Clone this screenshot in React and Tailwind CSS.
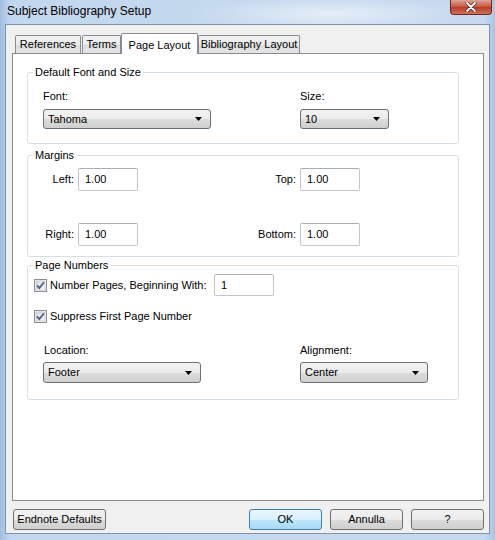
import React from 'react'

const FONT = { fontFamily: '"Liberation Sans", "DejaVu Sans", sans-serif' }

function Arrow() {
  return (
    <svg width="7" height="4" viewBox="0 0 7 4">
      <path d="M0 0 H7 L3.5 4 Z" fill="#000" />
    </svg>
  )
}

function Combo({ value, w, h }) {
  return (
    <div className={`${w} ${h} flex items-center justify-between pl-[4px] pr-[8px] border border-[#707070] rounded-[3px] bg-[linear-gradient(#f2f2f2,#ebebeb_50%,#dddddd_51%,#cfcfcf)] text-[11px] text-black whitespace-nowrap`}>
      <span>{value}</span>
      <Arrow />
    </div>
  )
}

function TextBox({ value, h = 'h-[23px]' }) {
  return (
    <div className={`w-[60px] ${h} flex items-center pl-[6px] bg-white border border-[#c3c6cc] border-t-[#a9adb4] rounded-[2px] text-[11px]`}>
      {value}
    </div>
  )
}

function Check() {
  return (
    <svg width="13" height="13" viewBox="0 0 13 13" className="shrink-0">
      <defs>
        <linearGradient id="cb" x1="0" y1="0" x2="1" y2="1">
          <stop offset="0" stopColor="#d7dbe2" />
          <stop offset="1" stopColor="#f9fafb" />
        </linearGradient>
      </defs>
      <rect x="0.5" y="0.5" width="12" height="12" fill="#f4f4f4" stroke="#8e8f8f" />
      <rect x="2" y="2" width="9" height="9" fill="url(#cb)" stroke="#b6bcc6" strokeWidth="0.6" />
      <path d="M3 6.3 L5.3 9 L10 3.2" fill="none" stroke="#4c5e86" strokeWidth="1.8" />
    </svg>
  )
}

function Group({ title, className = '', children }) {
  return (
    <fieldset className={`ml-[14px] mr-[24px] border border-[#d5dfe5] rounded-[3px] ${className}`}>
      <legend className="ml-[5px] px-[2px] text-[11px] leading-[14px] text-black whitespace-nowrap">{title}</legend>
      {children}
    </fieldset>
  )
}

function Button({ children, w, primary }) {
  const skin = primary
    ? 'border-[#3c7fb1] bg-[linear-gradient(#eaf6fd,#d9f0fc_50%,#bee6fd_51%,#a7d9f5)]'
    : 'border-[#707070] bg-[linear-gradient(#f2f2f2,#ebebeb_50%,#dddddd_51%,#cfcfcf)]'
  return (
    <div className={`${w} h-[21px] flex items-center justify-center border rounded-[3px] text-[11px] text-black whitespace-nowrap ${skin}`}>
      {children}
    </div>
  )
}

function Tab({ label, w, active }) {
  if (active) {
    return (
      <div className={`${w} h-[21px] -mb-[1px] z-10 flex items-start justify-center pt-[3px] bg-white border border-b-0 border-[#898c95] rounded-t-[2px] text-[11px] whitespace-nowrap`}>
        {label}
      </div>
    )
  }
  return (
    <div className={`${w} h-[18px] flex items-center justify-center bg-[linear-gradient(#f2f2f2,#ebebeb_50%,#dddddd_51%,#e3e3e3)] border border-b-0 border-[#898c95] rounded-t-[2px] text-[11px] whitespace-nowrap`}>
      {label}
    </div>
  )
}

export default function App() {
  return (
    <div style={FONT} className="w-[495px] h-[540px] flex flex-col overflow-hidden bg-[radial-gradient(ellipse_140px_18px_at_330px_14px,rgba(255,255,255,0.55),transparent),linear-gradient(90deg,#9fbde0,#c3d7ee_2%,#c6d9ee_98%,#a7c3e3)] text-black">
      {/* title bar */}
      <div className="h-[24px] flex items-start justify-between shrink-0">
        <div className="pl-[7px] pt-[4px] text-[12px] leading-[15px] text-black whitespace-nowrap">Subject Bibliography Setup</div>
        <div className="mr-[3px] w-[42px] h-[15px] flex items-center justify-center rounded-b-[4px] border border-t-0 border-[#6b2a20] bg-[linear-gradient(#e0a195,#c8553f_50%,#b73a24_51%,#d0705a)]">
          <svg width="12" height="10" viewBox="0 0 12 10">
            <path d="M2 1 L10 9 M10 1 L2 9" stroke="#4a2a26" strokeWidth="3.2" strokeLinecap="round" />
            <path d="M2 1 L10 9 M10 1 L2 9" stroke="#fff" strokeWidth="1.8" strokeLinecap="round" />
          </svg>
        </div>
      </div>

      {/* client area */}
      <div className="mx-[5px] mb-[6px] flex-1 flex flex-col bg-[#f0f0f0] border border-[#7f93aa]">
        <div className="flex items-end pl-[9px] pt-[7px] h-[28px] shrink-0">
          <Tab label="References" w="w-[66px]" />
          <div className="w-[1px]" />
          <Tab label="Terms" w="w-[39px]" />
          <Tab label="Page Layout" w="w-[77px]" active />
          <Tab label="Bibliography Layout" w="w-[102px]" />
        </div>

        <div className="ml-[6px] mr-[5px] h-[448px] bg-white border border-[#898c95] flex flex-col">
          <Group title="Default Font and Size" className="mt-[11px] pb-[14px]">
            <div className="flex pl-[15px] mt-[10px]">
              <div className="w-[257px]">
                <div className="h-[14px] leading-[14px] text-[11px]">Font:</div>
                <div className="mt-[6px]"><Combo value="Tahoma" w="w-[168px]" h="h-[20px]" /></div>
              </div>
              <div>
                <div className="h-[14px] leading-[14px] text-[11px]">Size:</div>
                <div className="mt-[6px]"><Combo value="10" w="w-[89px]" h="h-[20px]" /></div>
              </div>
            </div>
          </Group>

          <Group title="Margins" className="mt-[4px] pb-[10px]">
            <div className="flex items-center mt-[6px] text-[11px]">
              <div className="w-[46px] text-right">Left:</div>
              <div className="ml-[4px]"><TextBox value="1.00" /></div>
              <div className="w-[158px] text-right">Top:</div>
              <div className="ml-[4px]"><TextBox value="1.00" /></div>
            </div>
            <div className="flex items-center mt-[32px] text-[11px]">
              <div className="w-[46px] text-right">Right:</div>
              <div className="ml-[4px]"><TextBox value="1.00" /></div>
              <div className="w-[158px] text-right">Bottom:</div>
              <div className="ml-[4px]"><TextBox value="1.00" /></div>
            </div>
          </Group>

          <Group title="Page Numbers" className="mt-[1px] pb-[16px]">
            <div className="flex items-center mt-[2px] text-[11px]">
              <div className="w-[180px] ml-[6px] flex items-center whitespace-nowrap">
                <Check />
                <span className="ml-[3px]">Number Pages, Beginning With:</span>
              </div>
              <TextBox value="1" h="h-[22px]" />
            </div>
            <div className="flex items-center ml-[6px] mt-[13px] h-[14px] text-[11px] whitespace-nowrap">
              <Check />
              <span className="ml-[3px]">Suppress First Page Number</span>
            </div>
            <div className="flex pl-[15px] mt-[20px]">
              <div className="w-[257px]">
                <div className="h-[14px] leading-[14px] text-[11px] pl-[1px]">Location:</div>
                <div className="mt-[5px]"><Combo value="Footer" w="w-[158px]" h="h-[21px]" /></div>
              </div>
              <div>
                <div className="h-[14px] leading-[14px] text-[11px]">Alignment:</div>
                <div className="mt-[5px]"><Combo value="Center" w="w-[128px]" h="h-[21px]" /></div>
              </div>
            </div>
          </Group>
        </div>

        <div className="flex items-center mt-[8px] ml-[7px] mr-[5px]">
          <Button w="w-[93px]">Endnote Defaults</Button>
          <div className="flex-1" />
          <Button w="w-[73px]" primary>OK</Button>
          <div className="w-[8px]" />
          <Button w="w-[73px]">Annulla</Button>
          <div className="w-[8px]" />
          <Button w="w-[73px]">?</Button>
        </div>
      </div>
    </div>
  )
}
